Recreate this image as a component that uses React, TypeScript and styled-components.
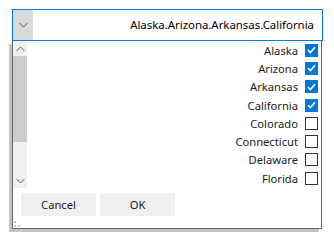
import React from 'react';
import styled, { createGlobalStyle } from 'styled-components';

const GlobalStyle = createGlobalStyle`
  html, body {
    margin: 0;
    padding: 0;
    background: #ffffff;
  }
  body {
    font-family: "Noto Sans", "Open Sans", "Liberation Sans", sans-serif;
    font-size: 11.2px;
    color: #000;
  }
`;

const states = [
  { name: 'Alaska', checked: true },
  { name: 'Arizona', checked: true },
  { name: 'Arkansas', checked: true },
  { name: 'California', checked: true },
  { name: 'Colorado', checked: false },
  { name: 'Connecticut', checked: false },
  { name: 'Delaware', checked: false },
  { name: 'Florida', checked: false },
];

const Chevron = ({ up }: { up?: boolean }) => (
  <svg width="9" height="6" viewBox="0 0 9 6">
    <polyline
      points={up ? '0.5,5 4.5,1 8.5,5' : '0.5,1 4.5,5 8.5,1'}
      fill="none"
      stroke="#606060"
      strokeWidth="1"
    />
  </svg>
);

const Tick = () => (
  <svg width="9" height="8" viewBox="0 0 9 8">
    <polyline points="1,4.2 3.4,6.5 8,1.3" fill="none" stroke="#ffffff" strokeWidth="1.6" />
  </svg>
);

const App = () => {
  const text = states.filter(s => s.checked).map(s => s.name).join('.');
  return (
    <>
      <GlobalStyle />
      <Page>
        <Combo>
          <DropButton>
            <Chevron />
          </DropButton>
          <ComboText>{text}</ComboText>
        </Combo>
        <Popup>
          <ListArea>
            <ScrollBar>
              <ArrowCell>
                <Chevron up />
              </ArrowCell>
              <Thumb />
              <Track />
              <ArrowCell>
                <Chevron />
              </ArrowCell>
            </ScrollBar>
            <List>
              {states.map(s => (
                <Row key={s.name}>
                  <RowLabel>{s.name}</RowLabel>
                  <Box checked={s.checked}>{s.checked && <Tick />}</Box>
                </Row>
              ))}
            </List>
          </ListArea>
          <Buttons>
            <Button>Cancel</Button>
            <Button>OK</Button>
          </Buttons>
          <Grip>
            <Dot />
            <Dot />
            <Dot />
          </Grip>
        </Popup>
      </Page>
    </>
  );
};

const Page = styled.div`
  padding: 9px 0 0 12px;
  width: 334px;
  height: 241px;
  box-sizing: border-box;
`;

const Combo = styled.div`
  display: flex;
  height: 32px;
  width: 311px;
  box-sizing: border-box;
  border: 1px solid #0078d7;
  background: #ffffff;
`;

const DropButton = styled.div`
  flex: 0 0 20px;
  background: #dadada;
  display: flex;
  align-items: center;
  justify-content: center;
`;

const ComboText = styled.div`
  flex: 1;
  min-width: 0;
  text-align: right;
  line-height: 30px;
  padding-right: 8px;
  white-space: nowrap;
  overflow: hidden;
  font-size: 11.4px;
`;

const Popup = styled.div`
  position: relative;
  width: 310px;
  height: 188px;
  box-sizing: border-box;
  border: 1px solid #646464;
  border-top: none;
  background: #ffffff;
  box-shadow: -3px 3px 0 #c4c4c4;
  display: flex;
  flex-direction: column;
`;

const ListArea = styled.div`
  display: flex;
  height: 147px;
`;

const ScrollBar = styled.div`
  width: 14px;
  display: flex;
  flex-direction: column;
  background: #f0f0f0;
`;

const ArrowCell = styled.div`
  height: 15px;
  display: flex;
  align-items: center;
  justify-content: center;
`;

const Thumb = styled.div`
  height: 86px;
  background: #cdcdcd;
`;

const Track = styled.div`
  flex: 1;
`;

const List = styled.div`
  flex: 1;
  display: flex;
  flex-direction: column;
  padding-right: 3px;
`;

const Row = styled.div`
  height: 18.3px;
  display: flex;
  align-items: center;
  justify-content: flex-end;
  gap: 7px;
`;

const RowLabel = styled.span`
  color: #1a1a1a;
  white-space: nowrap;
`;

const Box = styled.div<{ checked: boolean }>`
  width: 13px;
  height: 13px;
  box-sizing: border-box;
  border: 1px solid ${p => (p.checked ? '#0078d7' : '#333333')};
  background: ${p => (p.checked ? '#0078d7' : '#ffffff')};
  display: flex;
  align-items: center;
  justify-content: center;
`;

const Buttons = styled.div`
  display: flex;
  gap: 4px;
  padding: 5px 0 0 8px;
`;

const Button = styled.div`
  width: 75px;
  height: 23px;
  background: #f0f0f0;
  display: flex;
  align-items: center;
  justify-content: center;
  color: #1a1a1a;
`;

const Grip = styled.div`
  position: absolute;
  left: 1px;
  bottom: 1px;
  width: 6px;
  height: 6px;
`;

const Dot = styled.span`
  position: absolute;
  width: 2px;
  height: 2px;
  background: #c8c8c8;
  &:nth-child(1) { left: 0; top: 0; }
  &:nth-child(2) { left: 0; top: 4px; }
  &:nth-child(3) { left: 4px; top: 4px; }
`;

export default App;
